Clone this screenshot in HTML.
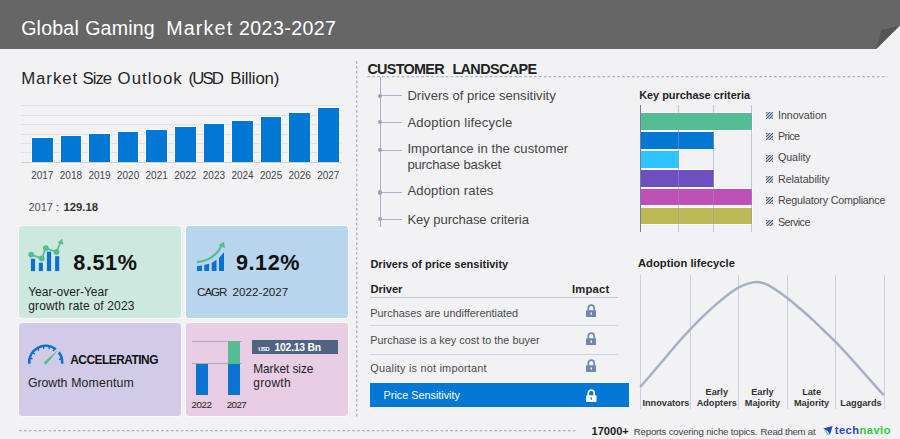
<!DOCTYPE html>
<html><head><meta charset="utf-8"><title>Global Gaming Market 2023-2027</title>
<style>
html,body{margin:0;padding:0;}
body{width:900px;height:439px;overflow:hidden;background:#f2f2f5;font-family:"Liberation Sans",sans-serif;position:relative;}
.t{position:absolute;white-space:nowrap;}
.r{position:absolute;}
</style></head><body>
<div class="r" style="left:0px;top:0px;width:900px;height:48.5px;background:#666666;"></div>
<svg class="r" style="left:870px;top:20px" width="30" height="30" viewBox="870 20 30 30"><path d="M876.4 49 L900 25.3 L900 49 Z" fill="#f2f2f5"/><path d="M876.6 48.6 L881.2 30.3 L900 25.4 Z" fill="#555555"/></svg>
<div class="t" style="left:21.20px;top:16.41px;font-size:19.6px;line-height:24px;color:#ffffff;letter-spacing:0.188px;">Global</div>
<div class="t" style="left:85.20px;top:16.41px;font-size:19.6px;line-height:24px;color:#ffffff;letter-spacing:0.194px;">Gaming</div>
<div class="t" style="left:166.20px;top:16.41px;font-size:19.6px;line-height:24px;color:#ffffff;letter-spacing:1.219px;">Market</div>
<div class="t" style="left:239.00px;top:16.41px;font-size:19.6px;line-height:24px;color:#ffffff;letter-spacing:0.408px;">2023-2027</div>
<div class="t" style="left:21.20px;top:68.68px;font-size:16.8px;line-height:20px;color:#262626;letter-spacing:0.931px;">Market</div>
<div class="t" style="left:82.60px;top:68.68px;font-size:16.8px;line-height:20px;color:#262626;letter-spacing:-1.028px;">Size</div>
<div class="t" style="left:117.60px;top:68.68px;font-size:16.8px;line-height:20px;color:#262626;letter-spacing:1.050px;">Outlook</div>
<div class="t" style="left:188.60px;top:68.68px;font-size:16.8px;line-height:20px;color:#262626;letter-spacing:-1.956px;">(USD</div>
<div class="t" style="left:230.20px;top:68.68px;font-size:16.8px;line-height:20px;color:#262626;letter-spacing:-0.174px;">Billion)</div>
<div class="r" style="left:21.3px;top:105.2px;width:321px;height:1px;background:#e1e1e4;"></div>
<div class="r" style="left:21.3px;top:114.7px;width:321px;height:1px;background:#e1e1e4;"></div>
<div class="r" style="left:21.3px;top:124.2px;width:321px;height:1px;background:#e1e1e4;"></div>
<div class="r" style="left:21.3px;top:133.5px;width:321px;height:1px;background:#e1e1e4;"></div>
<div class="r" style="left:21.3px;top:143.0px;width:321px;height:1px;background:#e1e1e4;"></div>
<div class="r" style="left:21.3px;top:152.4px;width:321px;height:1px;background:#e1e1e4;"></div>
<div class="r" style="left:32.0px;top:138px;width:20.6px;height:24.6px;background:#0277d3;box-shadow:0 0 0 1px rgba(255,255,255,0.7);"></div>
<div class="t" style="left:42.30px;top:169.53px;font-size:10px;line-height:12px;color:#444;width:40px;margin-left:-20.0px;text-align:center;">2017</div>
<div class="r" style="left:60.6px;top:136.2px;width:20.6px;height:26.4px;background:#0277d3;box-shadow:0 0 0 1px rgba(255,255,255,0.7);"></div>
<div class="t" style="left:70.90px;top:169.53px;font-size:10px;line-height:12px;color:#444;width:40px;margin-left:-20.0px;text-align:center;">2018</div>
<div class="r" style="left:89.2px;top:134.1px;width:20.6px;height:28.5px;background:#0277d3;box-shadow:0 0 0 1px rgba(255,255,255,0.7);"></div>
<div class="t" style="left:99.50px;top:169.53px;font-size:10px;line-height:12px;color:#444;width:40px;margin-left:-20.0px;text-align:center;">2019</div>
<div class="r" style="left:117.8px;top:132px;width:20.6px;height:30.6px;background:#0277d3;box-shadow:0 0 0 1px rgba(255,255,255,0.7);"></div>
<div class="t" style="left:128.10px;top:169.53px;font-size:10px;line-height:12px;color:#444;width:40px;margin-left:-20.0px;text-align:center;">2020</div>
<div class="r" style="left:146.4px;top:129.7px;width:20.6px;height:32.9px;background:#0277d3;box-shadow:0 0 0 1px rgba(255,255,255,0.7);"></div>
<div class="t" style="left:156.70px;top:169.53px;font-size:10px;line-height:12px;color:#444;width:40px;margin-left:-20.0px;text-align:center;">2021</div>
<div class="r" style="left:175.0px;top:127px;width:20.6px;height:35.6px;background:#0277d3;box-shadow:0 0 0 1px rgba(255,255,255,0.7);"></div>
<div class="t" style="left:185.30px;top:169.53px;font-size:10px;line-height:12px;color:#444;width:40px;margin-left:-20.0px;text-align:center;">2022</div>
<div class="r" style="left:203.6px;top:124px;width:20.6px;height:38.6px;background:#0277d3;box-shadow:0 0 0 1px rgba(255,255,255,0.7);"></div>
<div class="t" style="left:213.90px;top:169.53px;font-size:10px;line-height:12px;color:#444;width:40px;margin-left:-20.0px;text-align:center;">2023</div>
<div class="r" style="left:232.2px;top:120.5px;width:20.6px;height:42.1px;background:#0277d3;box-shadow:0 0 0 1px rgba(255,255,255,0.7);"></div>
<div class="t" style="left:242.50px;top:169.53px;font-size:10px;line-height:12px;color:#444;width:40px;margin-left:-20.0px;text-align:center;">2024</div>
<div class="r" style="left:260.8px;top:117px;width:20.6px;height:45.6px;background:#0277d3;box-shadow:0 0 0 1px rgba(255,255,255,0.7);"></div>
<div class="t" style="left:271.10px;top:169.53px;font-size:10px;line-height:12px;color:#444;width:40px;margin-left:-20.0px;text-align:center;">2025</div>
<div class="r" style="left:289.4px;top:112.5px;width:20.6px;height:50.1px;background:#0277d3;box-shadow:0 0 0 1px rgba(255,255,255,0.7);"></div>
<div class="t" style="left:299.70px;top:169.53px;font-size:10px;line-height:12px;color:#444;width:40px;margin-left:-20.0px;text-align:center;">2026</div>
<div class="r" style="left:318.0px;top:107.8px;width:20.6px;height:54.8px;background:#0277d3;box-shadow:0 0 0 1px rgba(255,255,255,0.7);"></div>
<div class="t" style="left:328.30px;top:169.53px;font-size:10px;line-height:12px;color:#444;width:40px;margin-left:-20.0px;text-align:center;">2027</div>
<div class="r" style="left:21.3px;top:162px;width:321px;height:1.1px;background:#cdcdd2;"></div>
<div class="t" style="left:28.50px;top:200.69px;font-size:11px;line-height:13px;color:#555;">2017 :</div>
<div class="t" style="left:63.50px;top:200.08px;font-size:11.3px;line-height:14px;color:#333;font-weight:bold;">129.18</div>
<div class="r" style="left:19px;top:226px;width:161.6px;height:92px;background:#cde8df;border-radius:3px;box-shadow:0 0 0 1px rgba(255,255,255,0.45);"></div>
<div class="r" style="left:186px;top:226px;width:162px;height:92px;background:#b8d5ed;border-radius:3px;box-shadow:0 0 0 1px rgba(255,255,255,0.45);"></div>
<div class="r" style="left:19px;top:323px;width:162px;height:92.5px;background:#d1cbe8;border-radius:3px;box-shadow:0 0 0 1px rgba(255,255,255,0.45);"></div>
<div class="r" style="left:186px;top:323px;width:162px;height:92.5px;background:#e8cde5;border-radius:3px;box-shadow:0 0 0 1px rgba(255,255,255,0.45);"></div>
<div class="t" style="left:73.30px;top:249.62px;font-size:21.6px;line-height:26px;color:#111;font-weight:bold;letter-spacing:0.588px;">8.51%</div>
<div class="t" style="left:28.20px;top:284.84px;font-size:12px;line-height:14px;color:#222;letter-spacing:0.013px;">Year-over-Year</div>
<div class="t" style="left:28.20px;top:298.74px;font-size:12px;line-height:14px;color:#222;letter-spacing:0.155px;">growth rate of 2023</div>
<div class="t" style="left:236.00px;top:249.62px;font-size:21.6px;line-height:26px;color:#111;font-weight:bold;letter-spacing:0.538px;">9.12%</div>
<div class="t" style="left:197.10px;top:284.78px;font-size:11.6px;line-height:14px;color:#222;letter-spacing:-1.038px;">CAGR</div>
<div class="t" style="left:232.60px;top:284.78px;font-size:11.6px;line-height:14px;color:#222;letter-spacing:0.028px;">2022-2027</div>
<div class="t" style="left:70.20px;top:352.58px;font-size:11.9px;line-height:14px;color:#111;font-weight:bold;letter-spacing:-0.487px;">ACCELERATING</div>
<div class="t" style="left:28.00px;top:375.64px;font-size:12.3px;line-height:15px;color:#222;letter-spacing:-0.049px;">Growth</div>
<div class="t" style="left:71.20px;top:375.64px;font-size:12.3px;line-height:15px;color:#222;letter-spacing:0.154px;">Momentum</div>
<div class="r" style="left:192px;top:340.6px;width:49.8px;height:1px;background:#a9a9c0;"></div>
<div class="r" style="left:192px;top:363.4px;width:49.8px;height:1px;background:#a9a9c0;"></div>
<div class="r" style="left:196.3px;top:364px;width:12px;height:31px;background:#0b74d1;"></div>
<div class="r" style="left:228.2px;top:341px;width:12px;height:23px;background:#55bd94;"></div>
<div class="r" style="left:228.2px;top:364px;width:12px;height:31px;background:#0b74d1;"></div>
<div class="t" style="left:191.40px;top:399.00px;font-size:9.8px;line-height:12px;color:#222;letter-spacing:-0.434px;">2022</div>
<div class="t" style="left:226.70px;top:399.00px;font-size:9.8px;line-height:12px;color:#222;letter-spacing:-0.567px;">2027</div>
<div class="r" style="left:252px;top:339.8px;width:86.2px;height:14.4px;background:#4f6480;"></div>
<div class="t" style="left:258.20px;top:344.89px;font-size:6.1px;line-height:7px;color:#fff;font-weight:bold;letter-spacing:-0.740px;">USD</div>
<div class="t" style="left:274.50px;top:341.70px;font-size:10.4px;line-height:12px;color:#fff;font-weight:bold;letter-spacing:-0.233px;">102.13 Bn</div>
<div class="t" style="left:253.20px;top:362.18px;font-size:11.9px;line-height:14px;color:#222;letter-spacing:-0.054px;">Market size</div>
<div class="t" style="left:253.20px;top:375.78px;font-size:11.9px;line-height:14px;color:#222;letter-spacing:0.336px;">growth</div>
<svg class="r" style="left:0;top:0" width="900" height="439" viewBox="0 0 900 439"><g stroke="#a3b4cf" stroke-width="1.25" stroke-dasharray="2.7 2.2" fill="none"><path d="M367.3 76.7 H887.4"/><path d="M356.7 61 V416.6"/><path d="M19 430.6 H577.6"/></g></svg>
<div class="t" style="left:367.40px;top:61.31px;font-size:14.4px;line-height:17px;color:#222;font-weight:bold;letter-spacing:-0.706px;">CUSTOMER</div>
<div class="t" style="left:452.40px;top:61.31px;font-size:14.4px;line-height:17px;color:#222;font-weight:bold;letter-spacing:-0.601px;">LANDSCAPE</div>
<div class="r" style="left:379.5px;top:77px;width:1px;height:149.8px;background:#a3b1c9;"></div>
<div class="r" style="left:380px;top:95px;width:21.6px;height:1px;background:#a9b6cc;"></div>
<div class="r" style="left:377.9px;top:93.5px;width:4.2px;height:4.2px;border-radius:2.1px;background:#94a3bd;"></div>
<div class="t" style="left:407.40px;top:88.06px;font-size:13.1px;line-height:16px;color:#444;letter-spacing:-0.004px;">Drivers of price sensitivity</div>
<div class="r" style="left:380px;top:122px;width:21.6px;height:1px;background:#a9b6cc;"></div>
<div class="r" style="left:377.9px;top:120.3px;width:4.2px;height:4.2px;border-radius:2.1px;background:#94a3bd;"></div>
<div class="t" style="left:407.40px;top:114.66px;font-size:13.1px;line-height:16px;color:#444;letter-spacing:0.179px;">Adoption lifecycle</div>
<div class="r" style="left:380px;top:150px;width:21.6px;height:1px;background:#a9b6cc;"></div>
<div class="r" style="left:377.9px;top:147.9px;width:4.2px;height:4.2px;border-radius:2.1px;background:#94a3bd;"></div>
<div class="t" style="left:407.40px;top:140.86px;font-size:13.1px;line-height:16px;color:#444;letter-spacing:0.083px;">Importance in the customer</div>
<div class="t" style="left:407.40px;top:156.56px;font-size:13.1px;line-height:16px;color:#444;letter-spacing:-0.166px;">purchase basket</div>
<div class="r" style="left:380px;top:192px;width:21.6px;height:1px;background:#a9b6cc;"></div>
<div class="r" style="left:377.9px;top:190.4px;width:4.2px;height:4.2px;border-radius:2.1px;background:#94a3bd;"></div>
<div class="t" style="left:407.40px;top:182.96px;font-size:13.1px;line-height:16px;color:#444;letter-spacing:0.117px;">Adoption rates</div>
<div class="r" style="left:380px;top:219px;width:21.6px;height:1px;background:#a9b6cc;"></div>
<div class="r" style="left:377.9px;top:217.0px;width:4.2px;height:4.2px;border-radius:2.1px;background:#94a3bd;"></div>
<div class="t" style="left:407.40px;top:211.76px;font-size:13.1px;line-height:16px;color:#444;letter-spacing:-0.073px;">Key purchase criteria</div>
<div class="t" style="left:639.20px;top:88.62px;font-size:10.9px;line-height:13px;color:#222;font-weight:bold;letter-spacing:0.006px;">Key purchase criteria</div>
<div class="r" style="left:640.5px;top:113.2px;width:111.2px;height:16.9px;background:#55bd94;box-shadow:0 0 0 1px rgba(255,255,255,0.92);"></div>
<div class="r" style="left:640.5px;top:132.1px;width:73.8px;height:16.9px;background:#0277d3;box-shadow:0 0 0 1px rgba(255,255,255,0.92);"></div>
<div class="r" style="left:640.5px;top:150.8px;width:38.3px;height:16.9px;background:#2ec4ff;box-shadow:0 0 0 1px rgba(255,255,255,0.92);"></div>
<div class="r" style="left:640.5px;top:169.7px;width:73.8px;height:16.9px;background:#6f4fbf;box-shadow:0 0 0 1px rgba(255,255,255,0.92);"></div>
<div class="r" style="left:640.5px;top:188.6px;width:111.2px;height:16.9px;background:#bd4fb7;box-shadow:0 0 0 1px rgba(255,255,255,0.92);"></div>
<div class="r" style="left:640.5px;top:207.6px;width:111.2px;height:16.9px;background:#bdb955;box-shadow:0 0 0 1px rgba(255,255,255,0.92);"></div>
<div class="r" style="left:677.8px;top:104.5px;width:1px;height:127px;background:rgba(140,155,190,0.5);"></div>
<div class="r" style="left:713.2px;top:104.5px;width:1px;height:127px;background:rgba(140,155,190,0.5);"></div>
<div class="r" style="left:750.8px;top:104.5px;width:1px;height:127px;background:rgba(140,155,190,0.5);"></div>
<div class="r" style="left:639.8px;top:104.5px;width:1.2px;height:127px;background:#6f7f9f;"></div>
<div class="r" style="left:765.8px;top:112.1px;width:6.8px;height:6.8px;background:repeating-linear-gradient(135deg,#56657f 0 1.1px,#b3bccb 1.1px 2.2px);"></div>
<div class="t" style="left:778.00px;top:108.79px;font-size:10.7px;line-height:13px;color:#444;letter-spacing:-0.064px;">Innovation</div>
<div class="r" style="left:765.8px;top:133.0px;width:6.8px;height:6.8px;background:repeating-linear-gradient(135deg,#56657f 0 1.1px,#b3bccb 1.1px 2.2px);"></div>
<div class="t" style="left:778.00px;top:129.69px;font-size:10.7px;line-height:13px;color:#444;letter-spacing:-0.620px;">Price</div>
<div class="r" style="left:765.8px;top:154.79999999999998px;width:6.8px;height:6.8px;background:repeating-linear-gradient(135deg,#56657f 0 1.1px,#b3bccb 1.1px 2.2px);"></div>
<div class="t" style="left:778.00px;top:151.49px;font-size:10.7px;line-height:13px;color:#444;letter-spacing:-0.100px;">Quality</div>
<div class="r" style="left:765.8px;top:175.9px;width:6.8px;height:6.8px;background:repeating-linear-gradient(135deg,#56657f 0 1.1px,#b3bccb 1.1px 2.2px);"></div>
<div class="t" style="left:778.00px;top:172.59px;font-size:10.7px;line-height:13px;color:#444;letter-spacing:-0.058px;">Relatability</div>
<div class="r" style="left:765.8px;top:197.29999999999998px;width:6.8px;height:6.8px;background:repeating-linear-gradient(135deg,#56657f 0 1.1px,#b3bccb 1.1px 2.2px);"></div>
<div class="t" style="left:778.00px;top:193.99px;font-size:10.7px;line-height:13px;color:#444;letter-spacing:-0.181px;">Regulatory Compliance</div>
<div class="r" style="left:765.8px;top:219.5px;width:6.8px;height:6.8px;background:repeating-linear-gradient(135deg,#56657f 0 1.1px,#b3bccb 1.1px 2.2px);"></div>
<div class="t" style="left:778.00px;top:216.19px;font-size:10.7px;line-height:13px;color:#444;letter-spacing:-0.547px;">Service</div>
<div class="t" style="left:370.40px;top:257.69px;font-size:11px;line-height:13px;color:#222;font-weight:bold;letter-spacing:0.009px;">Drivers of price sensitivity</div>
<div class="t" style="left:370.40px;top:282.72px;font-size:11.2px;line-height:13px;color:#222;font-weight:bold;letter-spacing:-0.055px;">Driver</div>
<div class="t" style="left:572.00px;top:282.72px;font-size:11.2px;line-height:13px;color:#222;font-weight:bold;letter-spacing:0.220px;">Impact</div>
<div class="r" style="left:370px;top:296.9px;width:248px;height:1px;background:#b9c6da;"></div>
<div class="r" style="left:370px;top:325px;width:248px;height:1px;background:#c8d2e1;"></div>
<div class="r" style="left:370px;top:354.2px;width:248px;height:1px;background:#c8d2e1;"></div>
<div class="t" style="left:370.30px;top:306.82px;font-size:10.9px;line-height:13px;color:#4a4a4a;letter-spacing:-0.012px;">Purchases are undifferentiated</div>
<div class="t" style="left:370.30px;top:333.82px;font-size:10.9px;line-height:13px;color:#4a4a4a;letter-spacing:-0.004px;">Purchase is a key cost to the buyer</div>
<div class="t" style="left:370.30px;top:361.92px;font-size:10.9px;line-height:13px;color:#4a4a4a;letter-spacing:0.214px;">Quality is not important</div>
<div class="r" style="left:369.7px;top:383px;width:259.5px;height:24px;background:#0277d3;"></div>
<div class="t" style="left:383.60px;top:389.12px;font-size:10.9px;line-height:13px;color:#fff;letter-spacing:-0.033px;">Price Sensitivity</div>
<svg class="r" style="left:585.75px;top:304px" width="10.5" height="13" viewBox="0 0 10.5 13"><path d="M2.3 6.5 V4 A2.95 2.95 0 0 1 8.2 4 V6.5" fill="none" stroke="#7086ab" stroke-width="1.7"/><rect x="0" y="6.2" width="10.5" height="6.8" rx="0.8" fill="#7086ab"/><path d="M4.5 8.6 h1.5 v1.6 l-0.75 0.8 l-0.75 -0.8 z" fill="#f2f2f5"/></svg>
<svg class="r" style="left:585.75px;top:332.1px" width="10.5" height="13" viewBox="0 0 10.5 13"><path d="M2.3 6.5 V4 A2.95 2.95 0 0 1 8.2 4 V6.5" fill="none" stroke="#7086ab" stroke-width="1.7"/><rect x="0" y="6.2" width="10.5" height="6.8" rx="0.8" fill="#7086ab"/><path d="M4.5 8.6 h1.5 v1.6 l-0.75 0.8 l-0.75 -0.8 z" fill="#f2f2f5"/></svg>
<svg class="r" style="left:585.75px;top:359.2px" width="10.5" height="13" viewBox="0 0 10.5 13"><path d="M2.3 6.5 V4 A2.95 2.95 0 0 1 8.2 4 V6.5" fill="none" stroke="#7086ab" stroke-width="1.7"/><rect x="0" y="6.2" width="10.5" height="6.8" rx="0.8" fill="#7086ab"/><path d="M4.5 8.6 h1.5 v1.6 l-0.75 0.8 l-0.75 -0.8 z" fill="#f2f2f5"/></svg>
<svg class="r" style="left:586.05px;top:388.6px" width="10.5" height="13" viewBox="0 0 10.5 13"><path d="M2.3 6.5 V4 A2.95 2.95 0 0 1 8.2 4 V6.5" fill="none" stroke="#ffffff" stroke-width="1.7"/><rect x="0" y="6.2" width="10.5" height="6.8" rx="0.8" fill="#ffffff"/><path d="M4.5 8.6 h1.5 v1.6 l-0.75 0.8 l-0.75 -0.8 z" fill="#0277d3"/></svg>
<div class="t" style="left:638.00px;top:257.22px;font-size:11.2px;line-height:13px;color:#222;font-weight:bold;letter-spacing:0.032px;">Adoption lifecycle</div>
<div class="r" style="left:639.9px;top:275px;width:1px;height:133.8px;background:#c9d0de;"></div>
<div class="r" style="left:689.9px;top:275px;width:1px;height:133.8px;background:#c9d0de;"></div>
<div class="r" style="left:737.9px;top:275px;width:1px;height:133.8px;background:#c9d0de;"></div>
<div class="r" style="left:786.7px;top:275px;width:1px;height:133.8px;background:#c9d0de;"></div>
<div class="r" style="left:835.0px;top:275px;width:1px;height:133.8px;background:#c9d0de;"></div>
<div class="r" style="left:883.5px;top:275px;width:1px;height:133.8px;background:#c9d0de;"></div>
<svg class="r" style="left:0;top:0" width="900" height="439" viewBox="0 0 900 439"><path d="M640.2 387.0 C641.7 385.3 645.5 381.0 649.1 376.8 C652.7 372.6 657.1 367.4 661.9 361.8 C666.7 356.2 673.0 348.5 677.8 343.0 C682.6 337.5 686.4 333.5 690.6 329.0 C694.9 324.5 699.0 320.3 703.3 316.2 C707.5 312.1 711.8 308.1 716.1 304.4 C720.4 300.7 725.2 296.7 728.9 293.9 C732.6 291.1 735.2 289.3 738.4 287.6 C741.6 285.9 744.9 284.5 748.0 283.6 C751.1 282.7 754.3 282.1 757.0 282.1 C759.7 282.1 761.9 282.8 764.0 283.4 C766.1 284.0 767.0 284.5 769.5 285.9 C772.0 287.3 775.7 289.7 778.7 291.7 C781.7 293.7 784.1 295.6 787.3 298.1 C790.5 300.6 793.9 303.4 797.8 306.7 C801.7 310.0 806.4 313.9 810.6 317.8 C814.9 321.7 819.1 326.0 823.3 330.0 C827.4 334.0 831.2 337.5 835.5 341.9 C839.8 346.2 844.5 351.4 848.9 356.1 C853.2 360.9 857.4 365.6 861.6 370.4 C865.9 375.2 870.7 380.7 874.4 384.8 C878.1 388.9 882.3 393.5 883.9 395.2" fill="none" stroke="#a4b0c6" stroke-width="2.5" stroke-linecap="butt"/></svg>
<div class="t" style="left:665.90px;top:398.31px;font-size:9.2px;line-height:11px;color:#333;font-weight:bold;width:60px;margin-left:-30.0px;text-align:center;">Innovators</div>
<div class="t" style="left:716.80px;top:387.41px;font-size:9.2px;line-height:11px;color:#333;font-weight:bold;width:60px;margin-left:-30.0px;text-align:center;">Early</div>
<div class="t" style="left:716.80px;top:398.31px;font-size:9.2px;line-height:11px;color:#333;font-weight:bold;width:60px;margin-left:-30.0px;text-align:center;">Adopters</div>
<div class="t" style="left:762.40px;top:387.41px;font-size:9.2px;line-height:11px;color:#333;font-weight:bold;width:60px;margin-left:-30.0px;text-align:center;">Early</div>
<div class="t" style="left:762.40px;top:398.31px;font-size:9.2px;line-height:11px;color:#333;font-weight:bold;width:60px;margin-left:-30.0px;text-align:center;">Majority</div>
<div class="t" style="left:811.60px;top:387.41px;font-size:9.2px;line-height:11px;color:#333;font-weight:bold;width:60px;margin-left:-30.0px;text-align:center;">Late</div>
<div class="t" style="left:811.60px;top:398.31px;font-size:9.2px;line-height:11px;color:#333;font-weight:bold;width:60px;margin-left:-30.0px;text-align:center;">Majority</div>
<div class="t" style="left:861.00px;top:398.31px;font-size:9.2px;line-height:11px;color:#333;font-weight:bold;width:60px;margin-left:-30.0px;text-align:center;">Laggards</div>
<div class="t" style="left:591.60px;top:424.65px;font-size:11.1px;line-height:13px;color:#222;font-weight:bold;letter-spacing:-0.030px;">17000+</div>
<div class="t" style="left:633.80px;top:425.67px;font-size:9.6px;line-height:12px;color:#444;letter-spacing:-0.165px;">Reports covering niche topics.</div>
<div class="t" style="left:760.60px;top:425.67px;font-size:9.6px;line-height:12px;color:#444;letter-spacing:-0.239px;">Read them at</div>
<svg class="r" style="left:823.2px;top:425.5px" width="10" height="9.6" viewBox="0 0 10 9.6"><path d="M0.2 2.4 L9.6 0.1 L6.9 9 L4.9 5.2 Z" fill="#1f45c8"/><path d="M0.9 4.3 C3 4.4,4.8 6.2,5.6 9.2 L4.4 9.2 C3.9 7,2.9 5.6,0.9 4.3 Z" fill="#2fcc3a"/></svg>
<div class="t" style="left:834.7px;top:423.99px;font-size:11px;line-height:13px;font-weight:bold;letter-spacing:0.544px;color:#1f45c8;">tech<span style="color:#2fcc3a">navio</span></div>
<svg class="r" style="left:24px;top:234px" width="50" height="42" viewBox="24 234 50 42"><g fill="#0b70d1"><rect x="30.9" y="258.7" width="4.2" height="12.4"/><rect x="38.8" y="262.7" width="4.1" height="8.4"/><rect x="46.9" y="251.7" width="4.2" height="19.4"/><rect x="55.1" y="256.2" width="4.1" height="14.9"/></g><g fill="#55bd94" stroke="none"><circle cx="31.2" cy="254.6" r="2.9"/><circle cx="41.7" cy="258.4" r="2.9"/><circle cx="45.8" cy="248.1" r="2.9"/><circle cx="56.5" cy="252" r="2.9"/><path d="M62.1 238.8 L63.5 244.6 L57.5 242.8 Z"/></g><path d="M31.2 254.6 L41.7 258.4 L45.8 248.1 L56.5 252 L60.4 242.6" fill="none" stroke="#55bd94" stroke-width="1.7"/></svg>
<svg class="r" style="left:190px;top:234px" width="50" height="42" viewBox="190 234 50 42"><g fill="#0b70d1"><path d="M196.9 271.1 V266.3 L201.95 265.6 V271.1Z"/><path d="M204.3 271.1 V265.1 L209.1 263.8 V271.1Z"/><path d="M211.8 271.1 V262.7 L216.5 259.8 V271.1Z"/><path d="M219 271.1 V257.9 L224 252.2 V271.1Z"/></g><path d="M196.9 262.2 C208 261,217 255,221.6 245.8" fill="none" stroke="#55bd94" stroke-width="2.2"/><path d="M223.9 241.8 L225.1 248.2 L218.3 245.2 Z" fill="#55bd94"/></svg>
<svg class="r" style="left:22px;top:338px" width="50" height="34" viewBox="22 338 50 34"><path d="M29.26 363.74 A16.5 16.5 0 0 1 55.86 349.30" fill="none" stroke="#0b70d1" stroke-width="2.6"/><path d="M58.88 352.37 A16.5 16.5 0 0 1 62.14 363.74" fill="none" stroke="#0b70d1" stroke-width="2.6"/><path d="M29.76 358.03 L32.66 358.81" stroke="#0b70d1" stroke-width="1.4"/><path d="M32.52 352.37 L34.92 354.18" stroke="#0b70d1" stroke-width="1.4"/><path d="M37.45 348.01 L38.95 350.61" stroke="#0b70d1" stroke-width="1.4"/><path d="M43.40 345.96 L43.82 348.93" stroke="#0b70d1" stroke-width="1.4"/><path d="M49.69 346.29 L48.97 349.20" stroke="#0b70d1" stroke-width="1.4"/><path d="M54.93 348.62 L53.25 351.11" stroke="#0b70d1" stroke-width="1.4"/><path d="M61.84 358.87 L58.90 359.49" stroke="#0b70d1" stroke-width="1.4"/><path d="M58.6 349.4 L46.6 364 A1.6 1.6 0 0 1 44.2 362 Z" fill="#55bd94"/></svg>
</body></html>
